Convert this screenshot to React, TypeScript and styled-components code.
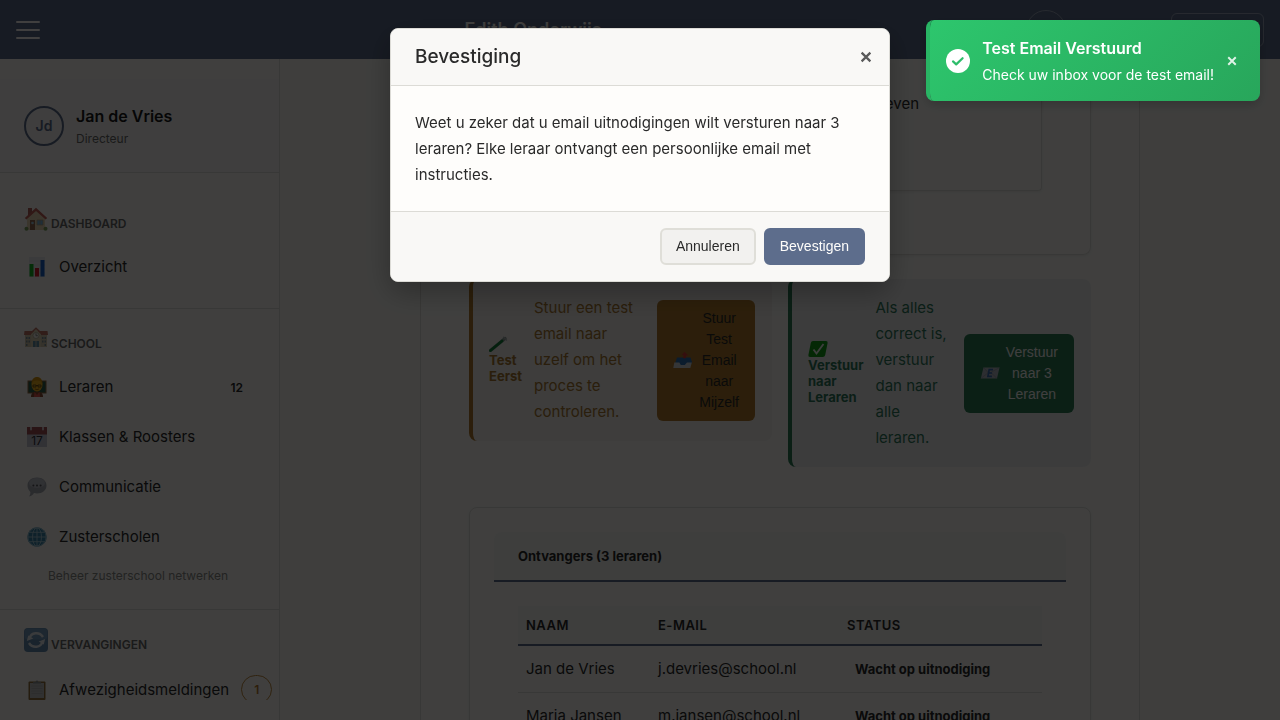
import React from "react";
import styled, { createGlobalStyle } from "styled-components";

const GlobalStyle = createGlobalStyle`
  * { box-sizing: border-box; }
  html, body { margin: 0; }
  body {
    font-family: Inter, "Liberation Sans", sans-serif;
    font-size: 15px;
    line-height: 26px;
    color: #2a2a2a;
    background: #fbfaf6;
  }
  h1, h2, h3, p { margin: 0; font-weight: inherit; }
  button { font: inherit; cursor: pointer; }
  a { color: inherit; text-decoration: none; }
`;

/* ---------- Page frame ---------- */

const Shell = styled.div`
  display: flex;
  flex-direction: column;
  height: 100vh;
  overflow: hidden;
`;

const TopBar = styled.header`
  display: flex;
  flex: none;
  align-items: center;
  justify-content: space-between;
  height: 59px;
  padding: 0 16px;
  background: #5d6d8c;
  color: #fdfcfa;
`;

const MenuButton = styled.button`
  display: flex;
  flex-direction: column;
  gap: 6px;
  width: 24px;
  padding: 0;
  border: 0;
  background: none;
`;

const MenuLine = styled.span`
  height: 2px;
  border-radius: 1px;
  background: #fdfcfa;
`;

const Brand = styled.h1`
  font-size: 18px;
  font-weight: 600;
`;

const Account = styled.div`
  display: flex;
  align-items: center;
  justify-content: space-between;
  width: 238px;
`;

const Avatar = styled.span<{ $light?: boolean }>`
  display: flex;
  flex: none;
  align-items: center;
  justify-content: center;
  width: 40px;
  height: 40px;
  border: ${(p) => (p.$light ? "1px solid #9aa5ba" : "2px solid #5d6d8c")};
  border-radius: 50%;
  color: ${(p) => (p.$light ? "#fdfcfa" : "#5d6d8c")};
  font-size: 14px;
  font-weight: 600;
`;

const SignOut = styled.button`
  width: 93px;
  height: 34px;
  padding: 0;
  border: 1px solid #9aa5ba;
  border-radius: 6px;
  background: none;
  color: inherit;
  font-size: 13px;
`;

const Body = styled.div`
  display: flex;
  flex: 1;
  min-height: 0;
`;

/* ---------- Sidebar ---------- */

const Sidebar = styled.aside`
  display: flex;
  flex: none;
  width: 280px;
  padding: 20px 0;
  border-right: 1px solid #e0dfda;
  background: #fdfcf8;
`;

const SidebarScroll = styled.div`
  flex: 1;
  min-width: 0;
  overflow: hidden;
`;

const Profile = styled.div`
  display: flex;
  align-items: center;
  gap: 12px;
  padding: 24px;
  border-bottom: 1px solid #e0dfda;
  background: #f9f8f6;
`;

const ProfileName = styled.div`
  font-size: 16px;
  font-weight: 600;
  color: #1a1a1a;
`;

const ProfileRole = styled.div`
  font-size: 12px;
  line-height: 19px;
  color: #6a6a6a;
`;

const Nav = styled.nav`
  padding-top: 16px;
`;

const NavSection = styled.section`
  padding: 16px 0;
  border-bottom: 1px solid #e0dfda;
`;

const SectionTitle = styled.h2`
  display: flex;
  align-items: flex-end;
  gap: 3px;
  padding: 0 24px 9px;
  font-size: 12px;
  font-weight: 600;
  line-height: 19px;
  text-transform: uppercase;
  color: #6a6a6a;

  svg { margin: 2px 0; opacity: 0.8; }
`;

const NavLink = styled.a`
  display: flex;
  align-items: center;
  gap: 12px;
  padding: 12px 24px;
  border-left: 3px solid transparent;
  white-space: nowrap;

  svg { flex: none; }
`;

const NavLabel = styled.span`
  flex: 1;
`;

const Count = styled.span<{ $alert?: boolean }>`
  padding: ${(p) => (p.$alert ? "4px 12px" : "0 12px")};
  border: ${(p) => (p.$alert ? "1px solid #c08a3e" : "0")};
  border-radius: 16px;
  font-size: 12px;
  font-weight: 600;
  line-height: 19px;
  color: ${(p) => (p.$alert ? "#b8782e" : "inherit")};
`;

const NavHint = styled.p`
  padding: 4px 24px 8px 48px;
  font-size: 12px;
  line-height: 19px;
  color: #8a8a86;
`;

/* ---------- Main column ---------- */

const Main = styled.main`
  flex: 1;
  min-width: 0;
  overflow: hidden;
  background: #f9f8f4;
`;

const Column = styled.div`
  max-width: 720px;
  margin: 0 auto;
  padding: 0 48px 48px;
  border: solid #e0dfda;
  border-width: 0 1px;
  background: #fdfcf8;
`;

const Card = styled.section<{ $joined?: boolean }>`
  padding: ${(p) => (p.$joined ? "0 48px 63px" : "24px")};
  border: 1px solid #e0dfda;
  border-top-width: ${(p) => (p.$joined ? "0" : "1px")};
  border-radius: ${(p) => (p.$joined ? "0 0 8px 8px" : "8px")};
  box-shadow: 0 1px 3px rgba(0, 0, 0, 0.08);
`;

const MessagePreview = styled.div`
  min-height: 132px;
  padding: 32px 24px 24px;
  border: 1px solid #e0dfda;
  border-top: 0;
  border-radius: 0 0 4px 4px;
  box-shadow: 0 1px 3px rgba(0, 0, 0, 0.08);
`;

const PreviewText = styled.p`
  max-width: 376px;
  text-align: right;
  white-space: nowrap;
`;

const Steps = styled.div`
  display: grid;
  grid-template-columns: 1fr 1fr;
  align-items: start;
  gap: 16px;
  margin: 24px 0 40px;
`;

const tones = {
  test: { ink: "#a87830", fill: "#b07a2c", bg: "#f5f1ee", label: "#2a2a2a" },
  send: { ink: "#2f7a5c", fill: "#2c7c56", bg: "#f0f0f0", label: "#fdfcfa" },
};

type Tone = keyof typeof tones;

const Step = styled.div<{ $tone: Tone }>`
  display: flex;
  align-items: center;
  gap: 12px;
  padding: 16px 17px 16px 16px;
  border-left: 4px solid ${(p) => tones[p.$tone].fill};
  border-radius: 8px;
  background: ${(p) => tones[p.$tone].bg};
  color: ${(p) => tones[p.$tone].ink};
`;

const StepTitle = styled.strong`
  width: min-content;
  font-size: 13px;
  font-weight: 700;
  line-height: 16px;

  svg { display: block; }
`;

const StepText = styled.p`
  flex: 1;
  min-width: 0;
  padding-right: 4px;
`;

const StepButton = styled.button<{ $tone: Tone }>`
  display: flex;
  flex: none;
  align-items: center;
  gap: 6px;
  padding: 8px 16px;
  border: 0;
  border-radius: 6px;
  background: ${(p) => tones[p.$tone].fill};
  color: ${(p) => tones[p.$tone].label};
  font-family: "Liberation Sans", Arial, sans-serif;
  font-size: 14px;
  line-height: 21px;
`;

const StepButtonLabel = styled.span`
  width: min-content;
`;

const CardHeading = styled.h2`
  padding: 16px 24px;
  border-bottom: 2px solid #5d6d8c;
  border-radius: 8px 8px 0 0;
  background: #f7f6f3;
  font-size: 13px;
  font-weight: 700;
  line-height: 16px;
`;

const CardBody = styled.div`
  padding: 24px;
`;

const Table = styled.table`
  width: 100%;
  border-collapse: collapse;
  text-align: left;
`;

const HeadCell = styled.th`
  padding: 8px;
  border-bottom: 2px solid #5d6d8c;
  background: #f5f5f4;
  font-size: 13px;
  font-weight: 600;
  line-height: 22px;
  letter-spacing: 0.5px;
  text-transform: uppercase;

  &:first-child { width: 132px; }
  &:nth-child(2) { width: 189px; }
`;

const Cell = styled.td`
  padding: 10px 8px;
  border-bottom: 1px solid #e0dfda;
`;

const Status = styled.span`
  padding: 0 8px;
  font-size: 13px;
  font-weight: 700;
`;

/* ---------- Dialog and toast ---------- */

const Backdrop = styled.div`
  position: fixed;
  inset: 0;
  display: flex;
  align-items: flex-start;
  justify-content: center;
  padding: 28px 16px;
  background: rgba(0, 0, 0, 0.75);
`;

const Dialog = styled.div`
  width: 100%;
  max-width: 500px;
  overflow: hidden;
  border: 1px solid #dcdbd6;
  border-radius: 8px;
  background: #fefdfb;
  box-shadow: 0 10px 30px rgba(0, 0, 0, 0.3);
`;

const DialogHeader = styled.div`
  display: flex;
  align-items: center;
  justify-content: space-between;
  padding: 15px 16px 15px 24px;
  border-bottom: 1px solid #dcdbd6;
  background: #f9f8f6;
`;

const DialogTitle = styled.h2`
  font-size: 19px;
  font-weight: 500;
`;

const CloseButton = styled.button<{ $onColor?: boolean }>`
  display: flex;
  padding: 0;
  border: 0;
  background: none;
  color: ${(p) => (p.$onColor ? "rgba(255, 255, 255, 0.85)" : "#5a5a5a")};
`;

const DialogText = styled.p`
  padding: 24px 24px 23px;
`;

const DialogActions = styled.div`
  display: flex;
  justify-content: flex-end;
  gap: 8px;
  padding: 16px 24px;
  border-top: 1px solid #dcdbd6;
  background: #f9f8f6;
`;

const ActionButton = styled.button<{ $primary?: boolean }>`
  padding: 6px 14px;
  border: 2px solid ${(p) => (p.$primary ? "#5d6d8c" : "#dfded8")};
  border-radius: 6px;
  background: ${(p) => (p.$primary ? "#5d6d8c" : "#f2f1ef")};
  color: ${(p) => (p.$primary ? "#fefdfb" : "#2a2a2a")};
  font-family: "Liberation Sans", Arial, sans-serif;
  font-size: 14px;
  line-height: 21px;
`;

const Toast = styled.div`
  position: fixed;
  top: 20px;
  right: 20px;
  display: flex;
  align-items: center;
  gap: 12px;
  min-width: 333px;
  padding: 16px 22px 16px 16px;
  border-left: 4px solid #29b564;
  border-radius: 8px;
  background: linear-gradient(135deg, #2dc66d, #28a65b) padding-box;
  color: #ffffff;
  box-shadow: 0 4px 12px rgba(0, 0, 0, 0.2);
`;

const ToastCopy = styled.div`
  flex: 1;
`;

const ToastTitle = styled.div`
  margin-bottom: 4px;
  font-size: 16px;
  font-weight: 600;
  line-height: 25px;
`;

const ToastMessage = styled.div`
  font-size: 14px;
  line-height: 20px;
`;

/* ---------- Drawings ---------- */

const Cross = ({ size }: { size: number }) => (
  <svg width={size} height={size} viewBox="0 0 16 16" fill="none" stroke="currentColor" strokeWidth="2.6" aria-hidden="true">
    <path d="M3 3l10 10M13 3L3 13" />
  </svg>
);

const CheckDisc = () => (
  <svg width="24" height="24" viewBox="0 0 24 24" aria-hidden="true">
    <circle cx="12" cy="12" r="12" fill="#fff" />
    <path d="M7 12.400l3.200 3 6.400-6.200" fill="none" stroke="#2ebd6b" strokeWidth="2.200" strokeLinecap="round" strokeLinejoin="round" />
  </svg>
);

const House = () => (
  <svg width="24" height="24" viewBox="0 0 24 24" aria-hidden="true">
    <path d="M4 1h4v7H4z" fill="#9c3a30" />
    <path d="M3 11l9-8 9 8v12H3z" fill="#e8cfa4" />
    <path d="M12 .8L.8 11l1.600 1.600L12 4l9.600 8.600L23.200 11z" fill="#b53a30" />
    <path d="M6 13h5v10H6z" fill="#7b4526" />
    <circle cx="8.500" cy="16" r="1.300" fill="#8ec1df" />
    <path d="M13 13h6v5h-6z" fill="#5aa9dc" stroke="#a58a66" strokeWidth=".8" />
    <path d="M16 13v5" stroke="#a58a66" strokeWidth=".7" />
    <circle cx="2.500" cy="21.700" r="2" fill="#5d8a34" />
    <circle cx="21.500" cy="21.700" r="2" fill="#5d8a34" />
  </svg>
);

const BarChart = () => (
  <svg width="20" height="20" viewBox="0 0 20 20" aria-hidden="true">
    <path d="M2 0h16v20H2z" fill="#e9ebee" />
    <path d="M2 4h16M2 8h16M2 12h16M2 16h16" stroke="#d3d9e4" strokeWidth=".6" />
    <path d="M2.500 7h4v12.500h-4z" fill="#12b422" />
    <path d="M8 11h4v8.500H8z" fill="#d81e2c" />
    <path d="M13.500 3h4v16.500h-4z" fill="#1a62c8" />
  </svg>
);

const School = () => (
  <svg width="24" height="24" viewBox="0 0 24 24" aria-hidden="true">
    <path d="M1 6h22v14H1z" fill="#c9bb98" />
    <path d="M.5 4h23l.5 4H0z" fill="#b5533f" />
    <path d="M7 7l5-5 5 5v13H7z" fill="#d8c9a2" />
    <path d="M6.400 6.500L12 1.200l5.600 5.300" fill="none" stroke="#b5533f" strokeWidth="1.500" />
    <circle cx="12" cy="8.500" r="3" fill="#f4f1e6" stroke="#8f8468" strokeWidth=".6" />
    <path d="M12 6.500v2.200h1.800" fill="none" stroke="#444" strokeWidth=".7" />
    <path d="M2 10h1.500v2H2zM4.500 10H6v2H4.500zM2 13.500h1.500v2H2zM4.500 13.500H6v2H4.500zM18 10h1.500v2H18zM20.500 10H22v2h-1.500zM18 13.500h1.500v2H18zM20.500 13.500H22v2h-1.500zM2 17h1.500v2H2zM20.500 17H22v2h-1.500z" fill="#5c7684" />
    <path d="M9 14h6v6H9z" fill="#3c7396" />
    <path d="M12 14v6" stroke="#d8c9a2" strokeWidth=".8" />
  </svg>
);

const Teacher = () => (
  <svg width="20" height="20" viewBox="0 0 20 20" aria-hidden="true">
    <path d="M.5 3.500h19v13H.5z" fill="#9a6c40" />
    <path d="M1.500 4.500h17v11h-17z" fill="#2f5f4d" />
    <path d="M4 20c0-4 2.500-5.500 6-5.500s6 1.500 6 5.500z" fill="#8d4c32" />
    <path d="M7.500 15l2.500 3 2.500-3 .5 5H7z" fill="#e4564e" />
    <ellipse cx="10" cy="8" rx="5.500" ry="6.500" fill="#efb01f" />
    <path d="M4.500 7c-.5-9.500 11.500-9.500 11 0-1-2.500-2.500-3.500-5.500-3.500S5.500 4.500 4.500 7z" fill="#d8950f" />
    <path d="M6 8h3v2H6zM11 8h3v2h-3zM9 8.500h2" fill="none" stroke="#5b4010" strokeWidth=".8" />
    <path d="M8 12q2 1.300 4 0" fill="none" stroke="#8a5a10" strokeWidth=".8" />
  </svg>
);

const Calendar = () => (
  <svg width="20" height="20" viewBox="0 0 20 20" aria-hidden="true">
    <path d="M0 0h20v20H0z" fill="#c8c8d4" />
    <path d="M0 0h20v7.500H0z" fill="#a34f55" />
    <path d="M4 0v2.500M16 0v2.500" stroke="#e5dadd" strokeWidth="1.800" strokeLinecap="round" />
    <text x="10" y="17.800" textAnchor="middle" fontFamily="Inter, sans-serif" fontSize="12" fill="#33333a">17</text>
  </svg>
);

const Speech = () => (
  <svg width="20" height="20" viewBox="0 0 20 20" aria-hidden="true">
    <path d="M10 .5c5.500 0 9.500 3.500 9.500 8s-4 8-9.500 8c-1 0-2-.1-3-.4-1 1.700-2.500 3-5 3.300 1-1.200 1.400-2.700 1.400-4.500C1.600 13.300.5 11 .5 8.500c0-4.500 4-8 9.500-8z" fill="#a9aab4" />
    <ellipse cx="10" cy="6" rx="8" ry="5" fill="#c0c1ca" />
    <g fill="#54555c"><circle cx="6.400" cy="8.600" r="1" /><circle cx="10" cy="8.600" r="1" /><circle cx="13.600" cy="8.600" r="1" /></g>
  </svg>
);

const Globe = () => (
  <svg width="20" height="20" viewBox="0 0 20 20" aria-hidden="true">
    <circle cx="10" cy="10" r="9.700" fill="#3a83a8" />
    <g fill="none" stroke="#a8ccd8" strokeWidth=".9">
      <circle cx="10" cy="10" r="9.200" />
      <ellipse cx="10" cy="10" rx="4.500" ry="9.200" />
      <path d="M10 1v18M1 10h18M2.500 5.300h15M2.500 14.700h15" />
    </g>
  </svg>
);

const Cycle = () => (
  <svg width="24" height="24" viewBox="0 0 24 24" aria-hidden="true">
    <rect width="24" height="24" rx="4" fill="#3f6f9f" />
    <rect x=".6" y=".6" width="22.800" height="11" rx="3.500" fill="#5584b0" />
    <g fill="none" stroke="#e4e9ee" strokeWidth="2.400">
      <path d="M5.500 10.500C7 4 15.500 3.500 19 9" />
      <path d="M18.500 13.500C17 20 8.500 20.500 5 15" />
    </g>
    <path d="M2.800 13l1.500-5.500 5 3zM21.200 11l-1.500 5.500-5-3z" fill="#e4e9ee" />
  </svg>
);

const Clipboard = () => (
  <svg width="20" height="20" viewBox="0 0 20 20" aria-hidden="true">
    <rect x="1.500" y="1.500" width="17" height="18.500" rx="1" fill="#94703e" />
    <path d="M3 3h14v15H3z" fill="#c2c2c2" />
    <path d="M4.500 6h11M4.500 8.500h11M4.500 11h11M4.500 13.500h11" stroke="#aeaeae" strokeWidth=".7" />
    <path d="M6 3.500V2h2.500Q10-.8 11.500 2H14v1.500z" fill="#8f9295" />
  </svg>
);

const TestTube = () => (
  <svg width="20" height="16" viewBox="0 0 20 16" aria-hidden="true">
    <path d="M16 2.500L1.500 14.500" stroke="#8e9c98" strokeWidth="3.200" strokeLinecap="round" />
    <path d="M13 5L1.500 14.500" stroke="#12803a" strokeWidth="2.800" strokeLinecap="round" />
    <path d="M14.500 1.200l3 2.800" stroke="#aab4b4" strokeWidth="1.300" strokeLinecap="round" />
  </svg>
);

const CheckTile = () => (
  <svg width="20" height="16" viewBox="0 0 20 16" aria-hidden="true">
    <path d="M5 0h13q2 0 1.600 2l-2.400 12q-.4 2-2.400 2H2Q0 16 .4 14L2.800 2Q3.200 0 5 0z" fill="#12a016" />
    <path d="M5.500 8.500l3 4L15.500 3" fill="none" stroke="#f2f6f0" strokeWidth="1.900" />
  </svg>
);

const OutTray = () => (
  <svg width="20" height="18" viewBox="0 0 20 18" aria-hidden="true">
    <path d="M4 6.500h13.500L19 11l-1.500 4H2l.5-4z" fill="#2f6fb4" />
    <path d="M1.300 11.500h5l1.500 2.500h4l2.200-2.500h4.800L17.300 17H.3z" fill="#d3d7da" />
    <path d="M11.500.8l4 3.700-2-.1-1 3-2.600-.5.800-2.700-2.200-.1z" fill="#d43e3a" />
  </svg>
);

const MailEnvelope = () => (
  <svg width="20" height="12" viewBox="0 0 20 12" aria-hidden="true">
    <path d="M3.500.5h16l-2.500 11H.8z" fill="#b3b9c2" />
    <path d="M3.500.5L9 6.500l10.500-6M.8 11.500L7.800 6M17 11.500L11.500 6" fill="none" stroke="#8b929e" strokeWidth=".6" />
    <path d="M13 2.700H9.200L7.900 9.300h4M8.600 6h3.500" fill="none" stroke="#3f6fb5" strokeWidth="1.700" />
  </svg>
);

/* ---------- Content ---------- */

const schoolLinks = [
  { label: "Leraren", Icon: Teacher, count: "12" },
  { label: "Klassen & Roosters", Icon: Calendar },
  { label: "Communicatie", Icon: Speech },
  { label: "Zusterscholen", Icon: Globe },
];

const recipients = [
  { name: "Jan de Vries", email: "j.devries@school.nl" },
  { name: "Maria Jansen", email: "m.jansen@school.nl" },
];

export default function App() {
  return (
    <>
      <GlobalStyle />
      <Shell>
        <TopBar>
          <MenuButton type="button" aria-label="Menu">
            <MenuLine />
            <MenuLine />
            <MenuLine />
          </MenuButton>
          <Brand>Edith Onderwijs</Brand>
          <Account>
            <Avatar $light>Jd</Avatar>
            <SignOut type="button">Uitloggen</SignOut>
          </Account>
        </TopBar>

        <Body>
          <Sidebar>
            <SidebarScroll>
              <Profile>
                <Avatar>Jd</Avatar>
                <div>
                  <ProfileName>Jan de Vries</ProfileName>
                  <ProfileRole>Directeur</ProfileRole>
                </div>
              </Profile>
              <Nav>
                <NavSection>
                  <SectionTitle><House />Dashboard</SectionTitle>
                  <NavLink href="#overzicht"><BarChart /><NavLabel>Overzicht</NavLabel></NavLink>
                </NavSection>
                <NavSection>
                  <SectionTitle><School />School</SectionTitle>
                  {schoolLinks.map(({ label, Icon, count }) => (
                    <NavLink href="#school" key={label}>
                      <Icon />
                      <NavLabel>{label}</NavLabel>
                      {count && <Count>{count}</Count>}
                    </NavLink>
                  ))}
                  <NavHint>Beheer zusterschool netwerken</NavHint>
                </NavSection>
                <NavSection>
                  <SectionTitle><Cycle />Vervangingen</SectionTitle>
                  <NavLink href="#afwezigheid">
                    <Clipboard />
                    <NavLabel>Afwezigheidsmeldingen</NavLabel>
                    <Count $alert>1</Count>
                  </NavLink>
                </NavSection>
              </Nav>
            </SidebarScroll>
          </Sidebar>

          <Main>
            <Column>
              <Card $joined>
                <MessagePreview>
                  <PreviewText>Klik op de link om uw voorkeuren door te geven</PreviewText>
                </MessagePreview>
              </Card>

              <Steps>
                <Step $tone="test">
                  <StepTitle><TestTube />Test Eerst</StepTitle>
                  <StepText>Stuur een test email naar uzelf om het proces te controleren.</StepText>
                  <StepButton type="button" $tone="test">
                    <OutTray />
                    <StepButtonLabel>Stuur Test Email naar Mijzelf</StepButtonLabel>
                  </StepButton>
                </Step>
                <Step $tone="send">
                  <StepTitle><CheckTile />Verstuur naar Leraren</StepTitle>
                  <StepText>Als alles correct is, verstuur dan naar alle leraren.</StepText>
                  <StepButton type="button" $tone="send">
                    <MailEnvelope />
                    <StepButtonLabel>Verstuur naar 3 Leraren</StepButtonLabel>
                  </StepButton>
                </Step>
              </Steps>

              <Card>
                <CardHeading>Ontvangers (3 leraren)</CardHeading>
                <CardBody>
                  <Table>
                    <thead>
                      <tr>
                        <HeadCell scope="col">Naam</HeadCell>
                        <HeadCell scope="col">E-mail</HeadCell>
                        <HeadCell scope="col">Status</HeadCell>
                      </tr>
                    </thead>
                    <tbody>
                      {recipients.map((r) => (
                        <tr key={r.email}>
                          <Cell>{r.name}</Cell>
                          <Cell>{r.email}</Cell>
                          <Cell><Status>Wacht op uitnodiging</Status></Cell>
                        </tr>
                      ))}
                    </tbody>
                  </Table>
                </CardBody>
              </Card>
            </Column>
          </Main>
        </Body>
      </Shell>

      <Backdrop>
        <Dialog role="dialog" aria-modal="true" aria-labelledby="confirm-title">
          <DialogHeader>
            <DialogTitle id="confirm-title">Bevestiging</DialogTitle>
            <CloseButton type="button" aria-label="Sluiten"><Cross size={14} /></CloseButton>
          </DialogHeader>
          <DialogText>
            Weet u zeker dat u email uitnodigingen wilt versturen naar 3 leraren? Elke leraar
            ontvangt een persoonlijke email met instructies.
          </DialogText>
          <DialogActions>
            <ActionButton type="button">Annuleren</ActionButton>
            <ActionButton type="button" $primary>Bevestigen</ActionButton>
          </DialogActions>
        </Dialog>
      </Backdrop>

      <Toast role="status">
        <CheckDisc />
        <ToastCopy>
          <ToastTitle>Test Email Verstuurd</ToastTitle>
          <ToastMessage>Check uw inbox voor de test email!</ToastMessage>
        </ToastCopy>
        <CloseButton type="button" aria-label="Melding sluiten" $onColor><Cross size={12} /></CloseButton>
      </Toast>
    </>
  );
}
